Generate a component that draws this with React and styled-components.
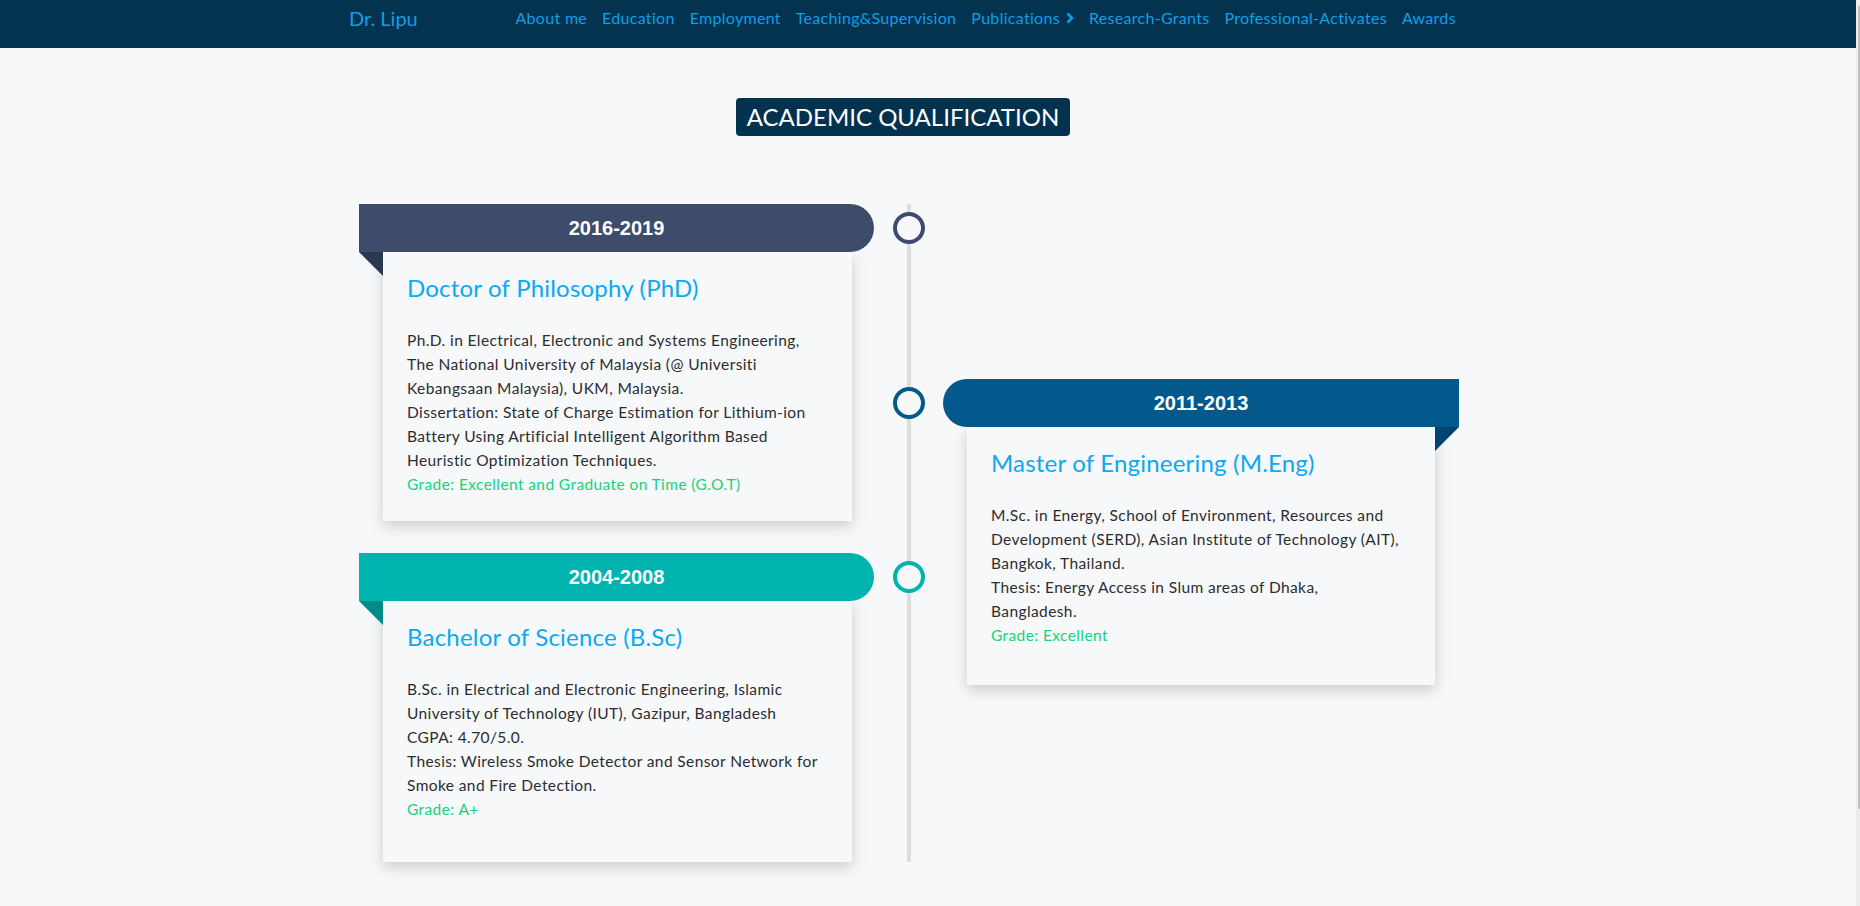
import styled, { createGlobalStyle } from 'styled-components';

// global
const GlobalStyle = createGlobalStyle`
  * { box-sizing: border-box; }
  body {
    margin: 0;
    background: #f7f8fa;
    font-family: Lato, "Open Sans", sans-serif;
    color: #2b2d30;
  }
`;

const Frame = styled.div`
  display: flex;
  height: 100vh;
  overflow: hidden;
`;

const Main = styled.main`
  flex: 1;
  min-width: 0;
`;

// thin scrollbar strip on the right edge
const ScrollTrack = styled.div`
  width: 4px;
  background: #ededed;
  display: flex;
  justify-content: flex-end;
  padding-top: 6px;
`;

const ScrollThumb = styled.div`
  width: 2px;
  height: 803px;
  background: #c1c1c1;
`;

//navbar
const NavBar = styled.nav`
  height: 48px;
  background: #03334f;
  padding-right: 38px;
`;

const NavInner = styled.div`
  width: 1120px;
  margin: 0 auto;
  display: flex;
  align-items: flex-start;
  padding-top: 8px;
  white-space: nowrap;
`;

const Brand = styled.a`
  flex-shrink: 0;
  width: 159px;
  font-size: 20px;
  line-height: 20px;
  color: #0d9fe8;
`;

const NavList = styled.ul`
  display: flex;
  flex-shrink: 0;
  list-style: none;
  margin: 0;
  padding: 0;
`;

const NavLink = styled.li`
  display: flex;
  flex-shrink: 0;
  align-items: center;
  gap: 6px;
  padding: 0 7.5px;
  font-size: 16px;
  line-height: 20px;
  letter-spacing: 0.3px;
  color: #0d9fe8;
`;

//heading
const HeadingRow = styled.div`
  display: flex;
  justify-content: center;
  padding-right: 50px;
  margin-top: 50px;
`;

const Heading = styled.h2`
  margin: 0;
  height: 38px;
  padding: 0 11px;
  border-radius: 4px;
  background: #03324f;
  color: #fff;
  font-size: 24px;
  font-weight: 400;
  line-height: 38px;
  text-transform: uppercase;
`;

//timeline
const TimelineWrap = styled.div`
  padding-right: 38px;
  margin-top: 68px;
`;

const Timeline = styled.div`
  width: 1100px;
  margin: 0 auto;
  display: grid;
  grid-template-columns: 515px 69px 516px;
`;

const Column = styled.div`
  display: flex;
  flex-direction: column;
  gap: 32px;
  padding-top: ${props => props.$offset || 0}px;
`;

const Axis = styled.div`
  display: flex;
  justify-content: center;

  &::before {
    content: '';
    width: 4px;
    background: #dcdde0;
  }
`;

const Item = styled.div`
  position: relative;
`;

const Banner = styled.div`
  position: relative;
  height: 48px;
  background: ${props => props.$color};
  border-radius: ${props => (props.$side === 'left' ? '0 24px 24px 0' : '24px 0 0 24px')};
  display: flex;
  justify-content: center;
  align-items: center;
  color: #fff;
  font-family: "Liberation Sans", Arial, sans-serif;
  font-weight: 700;
  font-size: 20px;

  &::after {
    content: '';
    position: absolute;
    top: 100%;
    ${props => (props.$side === 'left' ? 'left: 0;' : 'right: 0;')}
    width: 24px;
    height: 24px;
    background: ${props => props.$fold};
    clip-path: ${props =>
      props.$side === 'left'
        ? 'polygon(0 0, 100% 0, 100% 100%)'
        : 'polygon(0 0, 100% 0, 0 100%)'};
  }
`;

const Dot = styled.span`
  position: absolute;
  top: 8px;
  ${props => (props.$side === 'left' ? 'right: -50.5px;' : 'left: -50.5px;')}
  width: 32px;
  height: 32px;
  border-radius: 50%;
  border: 4px solid ${props => props.$color};
  background: #f7f8fa;
`;

const Card = styled.div`
  margin: ${props => (props.$side === 'left' ? '0 22px 0 24px' : '0 24px')};
  background: #f7f8fa;
  box-shadow: 0 5px 14px rgba(0, 0, 0, 0.18);
  padding: 21px 24px ${props => props.$bottom}px;
`;

const Title = styled.h3`
  margin: 0 0 26px;
  font-size: 24px;
  font-weight: 400;
  line-height: 29px;
  letter-spacing: 0.2px;
  color: #0aa9f2;
`;

const Body = styled.p`
  margin: 0;
  font-size: 15.5px;
  line-height: 24px;
  letter-spacing: 0.4px;
  white-space: nowrap;
`;

const Line = styled.span`
  display: block;
  color: ${props => (props.$grade ? '#17d27a' : 'inherit')};
`;

const Chevron = () => (
  <svg width="8" height="12" viewBox="0 0 8 12">
    <polyline points="1.5,1.5 6,6 1.5,10.5" fill="none" stroke="#0d9fe8" strokeWidth="2.6" />
  </svg>
);

const links = [
  'About me',
  'Education',
  'Employment',
  'Teaching&Supervision',
  'Publications',
  'Research-Grants',
  'Professional-Activates',
  'Awards'
];

const Entry = ({ side, color, fold, years, title, lines, grade, bottom }) => (
  <Item>
    <Banner $side={side} $color={color} $fold={fold}>
      {years}
      <Dot $side={side} $color={color} />
    </Banner>
    <Card $side={side} $bottom={bottom}>
      <Title>{title}</Title>
      <Body>
        {lines.map(l => (
          <Line key={l}>{l}</Line>
        ))}
        <Line $grade>{grade}</Line>
      </Body>
    </Card>
  </Item>
);

export default function App() {
  return (
    <Frame>
      <GlobalStyle />
      <Main>
        <NavBar>
          <NavInner>
            <Brand>Dr. Lipu</Brand>
            <NavList>
              {links.map(l => (
                <NavLink key={l}>
                  {l}
                  {l === 'Publications' && <Chevron />}
                </NavLink>
              ))}
            </NavList>
          </NavInner>
        </NavBar>

        <HeadingRow>
          <Heading>Academic Qualification</Heading>
        </HeadingRow>

        <TimelineWrap>
          <Timeline>
            <Column>
              <Entry
                side="left"
                color="#3d4c6a"
                fold="#2c3850"
                years="2016-2019"
                title="Doctor of Philosophy (PhD)"
                lines={[
                  'Ph.D. in Electrical, Electronic and Systems Engineering,',
                  'The National University of Malaysia (@ Universiti',
                  'Kebangsaan Malaysia), UKM, Malaysia.',
                  'Dissertation: State of Charge Estimation for Lithium-ion',
                  'Battery Using Artificial Intelligent Algorithm Based',
                  'Heuristic Optimization Techniques.'
                ]}
                grade="Grade: Excellent and Graduate on Time (G.O.T)"
                bottom={25}
              />
              <Entry
                side="left"
                color="#00b3ae"
                fold="#008b86"
                years="2004-2008"
                title="Bachelor of Science (B.Sc)"
                lines={[
                  'B.Sc. in Electrical and Electronic Engineering, Islamic',
                  'University of Technology (IUT), Gazipur, Bangladesh',
                  'CGPA: 4.70/5.0.',
                  'Thesis: Wireless Smoke Detector and Sensor Network for',
                  'Smoke and Fire Detection.'
                ]}
                grade="Grade: A+"
                bottom={41}
              />
            </Column>
            <Axis />
            <Column $offset={175}>
              <Entry
                side="right"
                color="#03598c"
                fold="#024470"
                years="2011-2013"
                title="Master of Engineering (M.Eng)"
                lines={[
                  'M.Sc. in Energy, School of Environment, Resources and',
                  'Development (SERD), Asian Institute of Technology (AIT),',
                  'Bangkok, Thailand.',
                  'Thesis: Energy Access in Slum areas of Dhaka,',
                  'Bangladesh.'
                ]}
                grade="Grade: Excellent"
                bottom={38}
              />
            </Column>
          </Timeline>
        </TimelineWrap>
      </Main>
      <ScrollTrack>
        <ScrollThumb />
      </ScrollTrack>
    </Frame>
  );
}
